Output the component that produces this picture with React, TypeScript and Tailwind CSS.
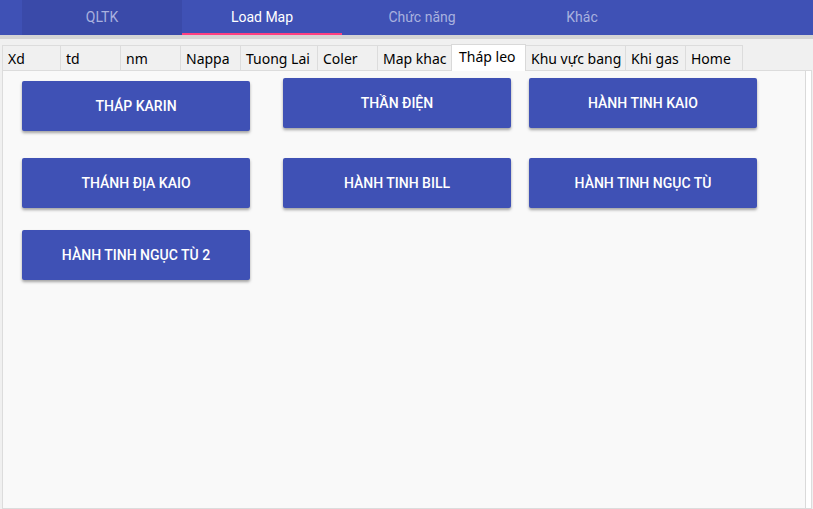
const topTabs = ['QLTK', 'Load Map', 'Chức năng', 'Khác'];

const subTabs: { label: string; w: number }[] = [
  { label: 'Xd', w: 59 },
  { label: 'td', w: 60 },
  { label: 'nm', w: 60 },
  { label: 'Nappa', w: 60 },
  { label: 'Tuong Lai', w: 77 },
  { label: 'Coler', w: 60 },
  { label: 'Map khac', w: 74 },
  { label: 'Tháp leo', w: 75 },
  { label: 'Khu vực bang', w: 100 },
  { label: 'Khi gas', w: 60 },
  { label: 'Home', w: 57 },
];

function MapButton({ label, className = '' }: { label: string; className?: string }) {
  return (
    <button
      className={`w-[228px] h-[50px] bg-[#3f51b5] text-white text-[14px] font-medium rounded-[2px] shadow-[0_2px_3px_rgba(0,0,0,0.35)] ${className}`}
      style={{ fontFamily: 'Roboto, sans-serif' }}
    >
      {label}
    </button>
  );
}

export default function App() {
  return (
    <div className="w-[813px] h-[509px] bg-[#f0f0f0] overflow-hidden flex flex-col">
      {/* Material top bar */}
      <div className="h-[35px] bg-[#3f51b5] flex pl-[22px]" style={{ fontFamily: 'Roboto, sans-serif' }}>
        {topTabs.map((t, i) => (
          <div
            key={t}
            className={`w-[160px] h-full flex items-center justify-center text-[14px] relative ${
              i === 0 ? 'bg-[#3a4aa9] text-[#a9b1df]' : i === 1 ? 'text-white' : 'text-[#a9b1df]'
            }`}
          >
            {t}
            {i === 1 && <span className="absolute left-0 right-0 bottom-0 h-[2px] bg-[#ff4081]" />}
          </div>
        ))}
      </div>
      <div className="h-[4px] bg-[#d4d4d4]" />

      {/* Tab control */}
      <div className="flex-1 flex flex-col pl-[2px] pr-[1px] pt-[4px]" style={{ fontFamily: '"Noto Sans", "Open Sans", sans-serif' }}>
        <div className="flex items-end h-[27px]">
          {subTabs.map((t, i) => {
            const active = t.label === 'Tháp leo';
            return (
              <div
                key={t.label}
                style={{ width: t.w }}
                className={`flex items-center px-[5px] text-[14px] text-black whitespace-nowrap border-t border-r ${
                  i === 0 ? 'border-l' : ''
                } ${
                  active
                    ? 'h-[27px] bg-white border-[#d9d9d9] border-l relative z-10 -mb-px -ml-px pb-[3px] pl-[7px]'
                    : 'h-[25px] bg-[#f0f0f0] border-[#dcdcdc]'
                }`}
              >
                {t.label}
              </div>
            );
          })}
        </div>
        <div className="flex-1 border border-[#dcdcdc] bg-white pr-[5px]">
          <div className="h-full bg-[#f9f9f9] border-r border-[#dadada] flex flex-col pl-[19px]">
            <div className="flex items-start">
              <MapButton label="THÁP KARIN" className="mt-[10px]" />
              <MapButton label="THẦN ĐIỆN" className="mt-[7px] ml-[33px]" />
              <MapButton label="HÀNH TINH KAIO" className="mt-[7px] ml-[18px]" />
            </div>
            <div className="flex items-start mt-[27px]">
              <MapButton label="THÁNH ĐỊA KAIO" />
              <MapButton label="HÀNH TINH BILL" className="ml-[33px]" />
              <MapButton label="HÀNH TINH NGỤC TÙ" className="ml-[18px]" />
            </div>
            <div className="flex items-start mt-[22px]">
              <MapButton label="HÀNH TINH NGỤC TÙ 2" />
            </div>
          </div>
        </div>
      </div>
    </div>
  );
}
